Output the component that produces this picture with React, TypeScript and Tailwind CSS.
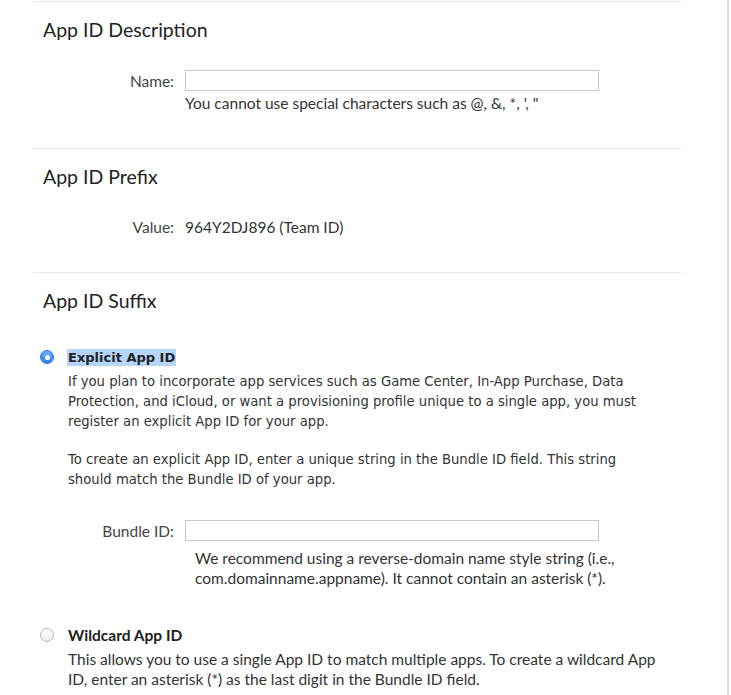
import React from "react";

const myriad = { fontFamily: "Lato, 'Liberation Sans', sans-serif" };
const lucida = { fontFamily: "'DejaVu Sans', 'Liberation Sans', sans-serif" };

export default function App() {
  return (
    <div className="w-[731px] h-[695px] overflow-hidden bg-white flex">
      <div className="w-[729px] h-full border-r-2 border-[#dcdcdc]">
        <div className="ml-[33px] w-[648px] pt-px text-[#333]" style={myriad}>
          {/* Section 1 */}
          <section className="border-t border-[#e6e6e6] pt-[16px] pb-[36px]">
            <h2 className="ml-[10px] text-[19.5px] leading-[24px] text-[#222]">App ID Description</h2>
            <div className="mt-[28px] flex items-center">
              <label className="w-[141px] text-right text-[15.5px] leading-[18px] text-[#444]">Name:</label>
              <input className="ml-[11px] w-[414px] h-[21px] border border-[#c8c8c8] bg-white outline-none" />
            </div>
            <p className="mt-[3px] ml-[152px] text-[15.5px] leading-[18px] text-[#333]">
              You cannot use special characters such as @, &amp;, *, ', "
            </p>
          </section>
          {/* Section 2 */}
          <section className="border-t border-[#e6e6e6] pt-[16px] pb-[36px]">
            <h2 className="ml-[10px] text-[19.5px] leading-[24px] text-[#222]">App ID Prefix</h2>
            <div className="mt-[29px] flex items-center text-[15.5px] leading-[18px]">
              <span className="w-[141px] text-right text-[#444]">Value:</span>
              <span className="ml-[11px] text-[#333]">964Y2DJ896 (Team ID)</span>
            </div>
          </section>
          {/* Section 3 */}
          <section className="border-t border-[#e6e6e6] pt-[16px]">
            <h2 className="ml-[10px] text-[19.5px] leading-[24px] text-[#222]">App ID Suffix</h2>
            <div className="mt-[34px] flex items-center h-[20px]">
              <span className="ml-[7px] w-[14px] h-[14px] rounded-full bg-gradient-to-b from-[#6aaefc] to-[#2f7ff0] border border-[#2a72d8] flex items-center justify-center">
                <span className="w-[5px] h-[5px] rounded-full bg-white" />
              </span>
              <span className="ml-[13px] bg-[#b5d5fd] px-px text-[13px] leading-[17px] font-bold text-[#222]" style={lucida}>
                Explicit App ID
              </span>
            </div>
            <div className="ml-[35px] text-[13.2px] leading-[20px] text-[#333]" style={lucida}>
              <p className="mt-[5px] w-[575px]">
                If you plan to incorporate app services such as Game Center, In-App Purchase, Data Protection, and iCloud, or want a provisioning profile unique to a single app, you must register an explicit App ID for your app.
              </p>
              <p className="mt-[18px] w-[575px]">
                To create an explicit App ID, enter a unique string in the Bundle ID field. This string should match the Bundle ID of your app.
              </p>
            </div>
            <div className="mt-[30px] flex items-center">
              <label className="w-[141px] text-right text-[15.5px] leading-[18px] text-[#444]">Bundle ID:</label>
              <input className="ml-[11px] w-[414px] h-[21px] border border-[#c8c8c8] bg-white outline-none" />
            </div>
            <p className="mt-[7px] ml-[162px] w-[440px] text-[15.5px] leading-[20px] text-[#333]">
              We recommend using a reverse-domain name style string (i.e., com.domainname.appname). It cannot contain an asterisk (*).
            </p>
            <div className="mt-[37px] flex items-center h-[20px]">
              <span className="ml-[7px] w-[14px] h-[14px] rounded-full bg-gradient-to-b from-white to-[#ececec] border border-[#b5b5b5]" />
              <span className="ml-[14px] text-[15.5px] leading-[18px] font-bold text-[#222]">Wildcard App ID</span>
            </div>
            <p className="mt-[4px] ml-[35px] w-[598px] text-[15.5px] leading-[20px] text-[#333]">
              This allows you to use a single App ID to match multiple apps. To create a wildcard App ID, enter an asterisk (*) as the last digit in the Bundle ID field.
            </p>
          </section>
        </div>
      </div>
    </div>
  );
}
